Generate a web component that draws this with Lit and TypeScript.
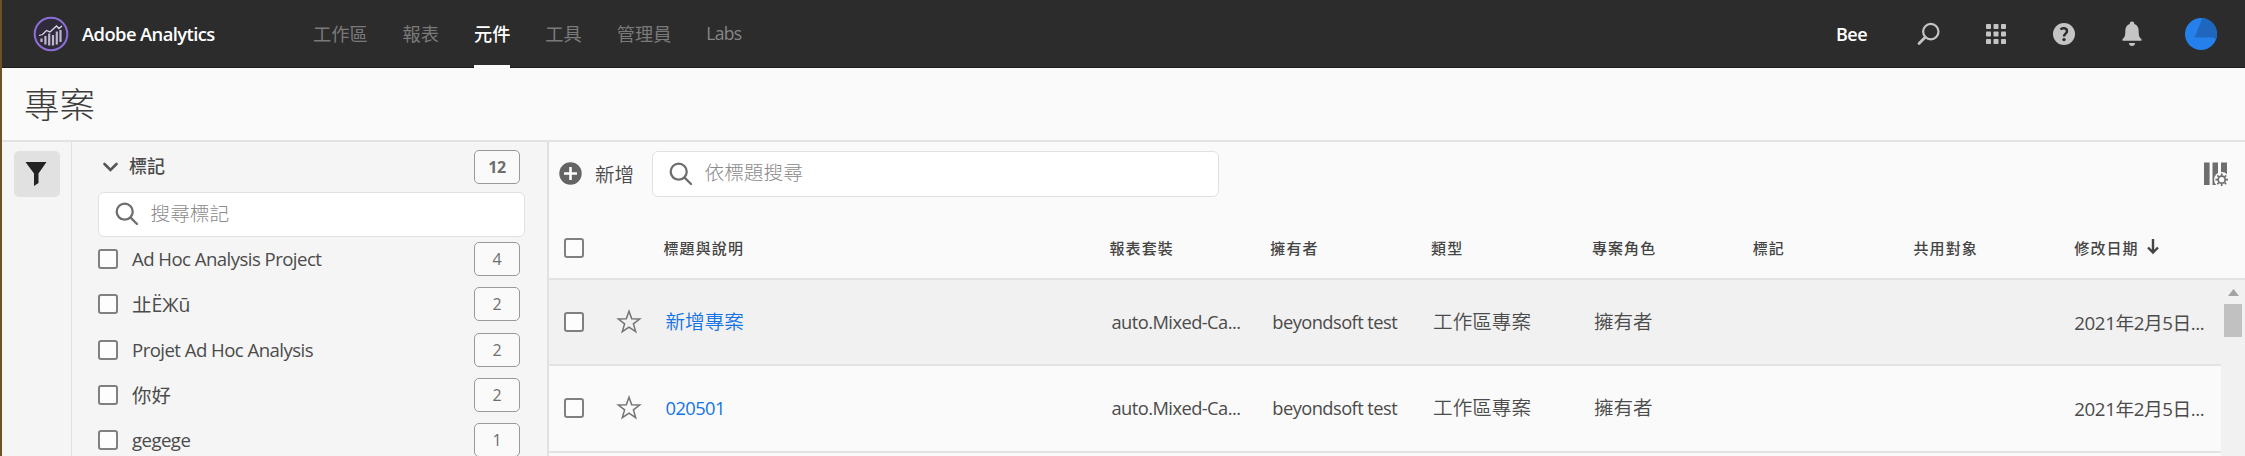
import { LitElement, html, css, svg } from "lit";
import { customElement } from "lit/decorators.js";

const TAGS = [
  ["Ad Hoc Analysis Project", 4],
  ["㐀ЁЖū", 2],
  ["Projet Ad Hoc Analysis", 2],
  ["你好", 2],
  ["gegege", 1],
];

const COLUMNS = ["報表套裝", "擁有者", "類型", "專案角色", "標記", "共用對象"];

const ROWS = [
  { title: "新增專案", cells: ["auto.Mixed-Ca...", "beyondsoft test", "工作區專案", "擁有者", "", "", "2021年2月5日..."] },
  { title: "020501", cells: ["auto.Mixed-Ca...", "beyondsoft test", "工作區專案", "擁有者", "", "", "2021年2月5日..."] },
];

const magnifier = html`<svg class="mag" width="24" height="24" viewBox="0 0 24 24" fill="none" stroke="#6e6e6e" stroke-width="2.3" stroke-linecap="round">
  <circle cx="9.7" cy="9.7" r="8"/><path d="M15.6 15.6 22 22"/></svg>`;

const star = html`<svg class="star" width="26" height="28" viewBox="0 0 26 28" fill="none" stroke="#747474" stroke-width="1.5" stroke-linejoin="miter">
  <path d="M13 3.200 15.700 10.800 23.700 11 17.400 15.900 19.700 23.600 13 19.100 6.300 23.600 8.600 15.900 2.300 11 10.300 10.800Z"/></svg>`;

@customElement("app-root")
class AppRoot extends LitElement {
  static styles = css`
    :host {
      display: block;
      height: 456px;
      overflow: hidden;
      background: #fafafa;
      color: #4b4b4b;
      font-family: "Open Sans", "Noto Sans CJK TC", sans-serif;
      font-size: 18px;
      white-space: nowrap;
    }
    * { box-sizing: border-box; }
    svg { display: block; flex: none; }
    .app { height: 456px; border-left: 2px solid #6d5222; display: flex; flex-direction: column; }
    .top { height: 68px; flex: none; background: #2c2c2c; display: flex; align-items: stretch; padding: 0 28px 0 31px; border-bottom: 1px solid #1c1c1c; }
    .brand { width: 280px; display: flex; align-items: center; color: #fff; font-weight: 600; font-size: 18.4px; letter-spacing: -0.6px; }
    .brand span { margin-left: 13px; }
    nav { display: flex; gap: 35px; color: #7a7a7a; flex: 1; }
    nav a { display: flex; align-items: center; font-size: 18.2px; padding-bottom: 1px; }
    nav .lat { font-size: 17.5px; letter-spacing: -0.7px; color: #868686; }
    nav .on { color: #fff; font-weight: 500; box-shadow: inset 0 -3px #fafafa; margin-bottom: -1px; padding-bottom: 2px; }
    .tools { display: flex; align-items: center; }
    .bee { color: #fff; font-weight: 600; width: 81px; font-size: 18px; letter-spacing: -0.5px; margin-left: -1px; }
    .cell { width: 68px; }
    .cell.bell { width: 64px; }
    .head { height: 74px; flex: none; border-bottom: 2px solid #e3e3e3; padding: 0 0 3px 22px; display: flex; align-items: center; font-size: 35.5px; font-weight: 300; color: #3c3c3c; }
    .body { flex: 1; min-height: 0; display: flex; }
    .rail { width: 70px; background: #f5f5f5; border-right: 1px solid #e1e1e1; padding: 9px 12px; }
    .filter { width: 46px; height: 46px; border-radius: 5px; background: #e1e1e1; display: flex; align-items: center; justify-content: center; padding-right: 2px; }
    .side { width: 477px; background: #f5f5f5; border-right: 2px solid #e1e1e1; padding: 7.5px 22px 0 26px; overflow: hidden; }
    .sec { height: 34px; display: flex; align-items: center; margin-right: 5px; }
    .sec b { font-weight: 500; flex: 1; margin-left: 7px; padding-bottom: 3px; }
    .badge { width: 46px; height: 34px; flex: none; border: 1.5px solid #999; border-radius: 5px; background: #fafafa; color: #6e6e6e; font-size: 16px; display: flex; align-items: center; justify-content: center; }
    .badge.total { font-weight: 700; letter-spacing: -0.5px; }
    .field { background: #fff; border: 1.5px solid #e1e1e1; border-radius: 6px; display: flex; align-items: center; color: #8a8a8a; padding-left: 15.5px; gap: 12px; font-size: 19.7px; font-weight: 300; }
    .field span { padding-bottom: 4px; }
    .side .field { height: 45px; margin: 8px 0 0; }
    .tag { height: 45.3px; display: flex; align-items: center; margin-right: 5px; }
    .tag span { flex: 1; margin-left: 14px; font-size: 18.6px; font-weight: 450; letter-spacing: -0.55px; padding-bottom: 1px; }
    .tag span.cjk { font-size: 19.4px; letter-spacing: 0; font-weight: 400; padding-bottom: 2px; }
    .box { width: 20px; height: 20px; flex: none; border: 2.5px solid #808080; border-radius: 3px; background: #fdfdfd; }
    .main { flex: 1; min-width: 0; display: flex; flex-direction: column; }
    .bar { height: 63px; flex: none; display: flex; align-items: center; padding: 0 16px 0 10px; }
    .bar .field { width: 567px; height: 46px; margin-left: 18px; }
    .bar .add { margin-left: 13px; width: 39px; font-size: 19.5px; padding-bottom: 1px; font-weight: 350; }
    .bar .cols { margin-left: auto; }
    .grid { display: grid; grid-template-columns: 52px 48px 446px repeat(5, 160.8px) 160.8px 1fr; align-items: center; padding-left: 14.5px; }
    .th { height: 75px; flex: none; border-bottom: 2px solid #e3e3e3; font-size: 15px; font-weight: 500; letter-spacing: 1.1px; padding-top: 12px; color: #444; }
    .th > span { padding-bottom: 1px; }
    .scroll { display: flex; flex: 1; min-height: 0; overflow: hidden; }
    .rows { flex: 1; }
    .tr { height: 86.3px; border-bottom: 2px solid #e3e3e3; }
    .tr.hot { background: #f1f1f1; }
    .tr > span { padding: 0 0 2px 2px; font-size: 18.3px; font-weight: 450; letter-spacing: -0.55px; }
    .tr > span.cjk { font-size: 19.6px; letter-spacing: 0; font-weight: 350; padding-bottom: 3px; }
    .tr > span:last-child { padding-left: 0; font-size: 18.7px; letter-spacing: -0.4px; font-weight: 400; }
    .tr .title { color: #1473e6; }
    .date { display: flex; align-items: center; gap: 7px; }
    .sb { width: 24px; background: #f1f1f1; padding: 9px 3px; display: flex; flex-direction: column; align-items: center; gap: 8px; }
    .thumb { width: 18px; height: 33px; flex: none; background: #c1c1c1; }
  `;

  private kind(text: string) {
    return /^[\u3400-\u9fff]/.test(text) ? "cjk" : "";
  }

  render() {
    return html`<div class="app">
      <header class="top">
        <div class="brand">
          <svg width="36" height="36" viewBox="0 0 36 36" fill="none">
            <circle cx="18" cy="18" r="16.3" fill="#302b3c" stroke="#8d6fd6" stroke-width="2"/>
            <g stroke="#bdb6cc" stroke-width="2.2"><path d="M8.500 22.500V26M12.400 20V28.500M16.200 17.500V29.500M20 19V29.500M23.800 15.500V28.500M27.500 14V26"/></g>
            <path d="M6 19.500 9.500 18.500 13.500 14.500 17 16 23.500 10 26 12.500 29 10" stroke="#dcd7e8" stroke-width="1.300"/>
          </svg>
          <span>Adobe Analytics</span>
        </div>
        <nav><a>工作區</a><a>報表</a><a class="on">元件</a><a>工具</a><a>管理員</a><a class="lat">Labs</a></nav>
        <div class="tools">
          <div class="bee">Bee</div>
          <div class="cell"><svg width="24" height="24" viewBox="0 0 24 24" fill="none" stroke="#c4c4c4" stroke-width="2.2"><circle cx="13.8" cy="9.6" r="7.7"/><path d="M8.2 15.3 2 21.5" stroke-width="2.8" stroke-linecap="round"/></svg></div>
          <div class="cell"><svg width="22" height="22" viewBox="0 0 22 22" fill="#c4c4c4">${[1, 8.5, 16].map((y) => [1, 8.5, 16].map((x) => svg`<rect x=${x} y=${y} width="5" height="5" rx=".8"/>`))}</svg></div>
          <div class="cell"><svg width="22" height="22" viewBox="0 0 22 22"><circle cx="11" cy="11" r="11" fill="#c4c4c4"/><path d="M7.6 6.600C8.800 4.600 14 4.600 14 8.200 14 10.600 11 10.600 11 13.400" fill="none" stroke="#2c2c2c" stroke-width="2.500"/><circle cx="11" cy="16.600" r="1.700" fill="#2c2c2c"/></svg></div>
          <div class="cell bell"><svg width="22" height="26" viewBox="0 0 22 26" fill="#c4c4c4"><path d="M11 .5A2.200 2.200 0 0 1 13.200 3C16.500 4 17.700 7 17.700 10.500 17.700 15 18.500 16.500 20.500 18V19.800H1.500V18C3.500 16.500 4.300 15 4.300 10.500 4.300 7 5.500 4 8.800 3A2.200 2.200 0 0 1 11 .5ZM8 22H14A3 3 0 0 1 8 22Z"/></svg></div>
          <svg width="32" height="32" viewBox="0 0 32 32"><circle cx="16" cy="16" r="16" fill="#2680eb"/><path d="M17.500 0A16 16 0 0 1 31 21.500L28.500 19.500H9.500Z" fill="#1f66bf"/></svg>
        </div>
      </header>
      <div class="head">專案</div>
      <div class="body">
        <div class="rail"><div class="filter"><svg width="24" height="26" viewBox="0 0 24 26" fill="#222"><path d="M1.500 1H22.500L14.500 12.500V22L10 25V12.500Z"/></svg></div></div>
        <aside class="side">
          <div class="sec"><svg width="24" height="16" viewBox="0 0 24 16" fill="none" stroke="#555" stroke-width="2.600" stroke-linecap="round"><path d="M6.500 5 12.500 11 18.500 5"/></svg><b>標記</b><div class="badge total">12</div></div>
          <div class="field">${magnifier}<span>搜尋標記</span></div>
          <div class="tags">${TAGS.map(([name, n]) => html`<div class="tag"><div class="box"></div><span class=${this.kind(String(name))}>${name}</span><div class="badge">${n}</div></div>`)}</div>
        </aside>
        <main class="main">
          <div class="bar">
            <svg width="23" height="23" viewBox="0 0 23 23"><circle cx="11.500" cy="11.500" r="11.200" fill="#646464"/><path d="M11.500 5V18M5 11.500H18" stroke="#fff" stroke-width="2.600"/></svg>
            <span class="add">新增</span>
            <div class="field">${magnifier}<span>依標題搜尋</span></div>
            <svg class="cols" width="26" height="26" viewBox="0 0 26 26"><path d="M1 1.500H6.600V24H1ZM9.500 1.500H15V24H9.500ZM18 1.500H24V24H18Z" fill="#6e6e6e"/><circle cx="18.700" cy="18.700" r="7.600" fill="#fafafa"/><circle cx="18.700" cy="18.700" r="3.500" fill="none" stroke="#6e6e6e" stroke-width="1.700"/><path d="M18.700 12.500V15M18.700 22.500V25M12.500 18.700H15M22.500 18.700H25M14.300 14.300 16 16M21.500 21.500 23.200 23.200M14.300 23.200 16 21.500M21.500 16 23.200 14.300" stroke="#6e6e6e" stroke-width="1.700"/></svg>
          </div>
          <div class="grid th">
            <div class="box"></div><i></i><span>標題與說明</span>
            ${COLUMNS.map((c) => html`<span>${c}</span>`)}
            <span class="date">修改日期<svg width="14" height="18" viewBox="0 0 14 18" fill="none" stroke="#444" stroke-width="2.400"><path d="M7 1V15M2 9.500 7 14.500 12 9.500"/></svg></span>
          </div>
          <div class="scroll">
            <div class="rows">${ROWS.map((r, i) => html`<div class="grid tr ${i === 0 ? "hot" : ""}"><div class="box"></div>${star}<span class="title ${this.kind(r.title)}">${r.title}</span>${r.cells.map((c) => html`<span class=${this.kind(c)}>${c}</span>`)}</div>`)}</div>
            <div class="sb"><svg width="11" height="7" viewBox="0 0 11 7"><path d="M5.500 0 11 7H0Z" fill="#a3a3a3"/></svg><div class="thumb"></div></div>
          </div>
        </main>
      </div>
    </div>`;
  }
}
